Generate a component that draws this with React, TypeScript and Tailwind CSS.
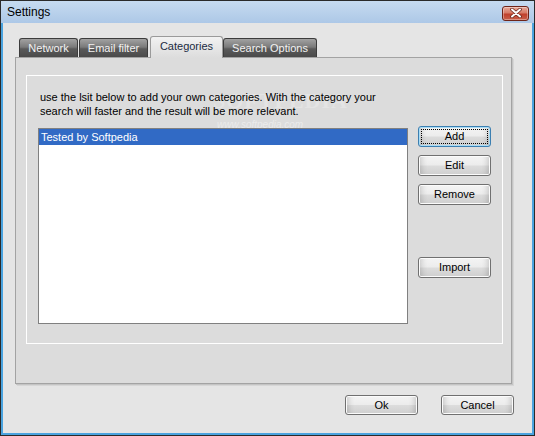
import React from 'react'

const font = { fontFamily: '"Liberation Sans", Arial, sans-serif' }

const WinButton: React.FC<{ label: string; focused?: boolean; className?: string }> = (props) => {
  return (
    <button
      type="button"
      className={`relative flex h-[20px] w-[73px] items-center justify-center rounded-[3px] border text-[11px] text-black bg-[linear-gradient(to_bottom,#f4f4f4_0%,#ececec_48%,#dcdcdc_52%,#cfcfcf_100%)] ${
        props.focused
          ? 'border-[#3c7fb1] shadow-[inset_0_0_0_1px_#a8dcf6,inset_7px_0_6px_-5px_rgba(0,0,0,0.18),inset_-7px_0_6px_-5px_rgba(0,0,0,0.18)]'
          : 'border-[#707070] shadow-[inset_0_0_0_1px_#fbfbfb,inset_7px_0_6px_-5px_rgba(0,0,0,0.2),inset_-7px_0_6px_-5px_rgba(0,0,0,0.2)]'
      } ${props.className ?? ''}`}
    >
      {props.focused && (
        <span className="absolute inset-[2px] border border-dotted border-black"></span>
      )}
      <span className="relative leading-none">{props.label}</span>
    </button>
  )
}

const Tab: React.FC<{ label: string; active?: boolean; className?: string }> = (props) => {
  if (props.active) {
    return (
      <div
        className={`relative z-10 -mb-px flex h-[22px] items-center justify-center rounded-t-[3px] border border-b-0 border-[#9a9a9a] bg-[linear-gradient(to_bottom,#f2f2f2,#dcdcdc)] pb-[2px] text-[11px] text-[#1b2b42] ${
          props.className ?? ''
        }`}
      >
        {props.label}
      </div>
    )
  }
  return (
    <div
      className={`flex h-[19px] items-center justify-center rounded-t-[3px] border border-b-0 border-[#3c3c3c] bg-[linear-gradient(to_bottom,#a2a2a2_0%,#7a7a7a_45%,#5a5a5a_55%,#4a4a4a_100%)] pt-[1px] text-[11px] text-[#f2f2f2] ${
        props.className ?? ''
      }`}
    >
      {props.label}
    </div>
  )
}

export default function App() {
  return (
    <div className="h-[436px] w-[535px] border border-[#2a2a2a] bg-[#4aa3df]" style={font}>
      {/* title bar */}
      <div className="flex h-[22px] items-center justify-between bg-[linear-gradient(to_bottom,#c6dbf0,#adc8e7)] pl-[6px] pr-[5px]">
        <span className="text-[12px] text-black">Settings</span>
        <div className="mt-[2px] flex h-[15px] w-[27px] items-center justify-center rounded-[3px] border border-[#6e2418] bg-[linear-gradient(to_bottom,#e8aa9a_0%,#d67a66_45%,#c0402c_55%,#c8604a_100%)] shadow-[inset_0_0_0_1px_rgba(255,255,255,0.35)]">
          <svg width="12" height="10" viewBox="0 0 12 10">
            <path d="M2 1.5 L10 8.5 M10 1.5 L2 8.5" stroke="#6b2a20" strokeWidth="3.6" strokeLinecap="round" />
            <path d="M2 1.5 L10 8.5 M10 1.5 L2 8.5" stroke="#ffffff" strokeWidth="2" strokeLinecap="round" />
          </svg>
        </div>
      </div>

      {/* body */}
      <div className="mx-[2px] flex h-[410px] flex-col bg-[#e5e5e5] pt-[13px]">
        <div className="ml-[12px] w-[497px]">
          {/* tab strip */}
          <div className="flex h-[21px] items-end pl-[4px]">
            <Tab label="Network" className="w-[59px]" />
            <Tab label="Email filter" className="ml-[1px] w-[69px]" />
            <Tab label="Categories" active className="ml-[2px] w-[73px]" />
            <Tab label="Search Options" className="w-[94px]" />
          </div>

          {/* tab panel */}
          <div className="h-[327px] border border-[#a3a3a3] bg-[#dcdcdc] pl-[10px] pt-[17px] shadow-[1px_1px_0_#c4c4c4,2px_2px_0_#d6d6d6]">
            <div className="relative h-[269px] w-[477px] border border-white pl-[11px] pt-[14px]">
              {/* watermark */}
              <div
                className="pointer-events-none absolute left-[186px] top-[8px] text-[22px] font-bold tracking-[1px] text-white/25"
                style={{ fontFamily: '"Liberation Serif", serif' }}
              >
                SOFTPEDIA
              </div>
              <div className="pointer-events-none absolute left-[190px] top-[41px] text-[10px] italic text-white/45">
                www.softpedia.com
              </div>

              <p className="relative pl-[2px] text-[11px] leading-[14px] text-black">
                use the lsit below to add your own categories. With the category your
                <br />
                search will faster and the result will be more relevant.
              </p>

              <div className="relative mt-[10px] flex gap-[10px]">
                <div className="h-[196px] w-[370px] border border-[#808080] bg-white">
                  <div className="flex h-[16px] items-center bg-[#316ac5] pl-[2px] text-[11px] text-white">
                    Tested by Softpedia
                  </div>
                </div>
                <div className="-mt-[2px] flex flex-col">
                  <WinButton label="Add" focused className="h-[21px]" />
                  <WinButton label="Edit" className="mt-[8px] h-[21px]" />
                  <WinButton label="Remove" className="mt-[8px] h-[21px]" />
                  <WinButton label="Import" className="mt-[52px] h-[21px]" />
                </div>
              </div>
            </div>
          </div>
        </div>

        {/* dialog buttons */}
        <div className="mr-[18px] mt-[11px] flex justify-end gap-[23px]">
          <WinButton label="Ok" className="w-[72px]" />
          <WinButton label="Cancel" className="w-[72px]" />
        </div>
      </div>
    </div>
  )
}
